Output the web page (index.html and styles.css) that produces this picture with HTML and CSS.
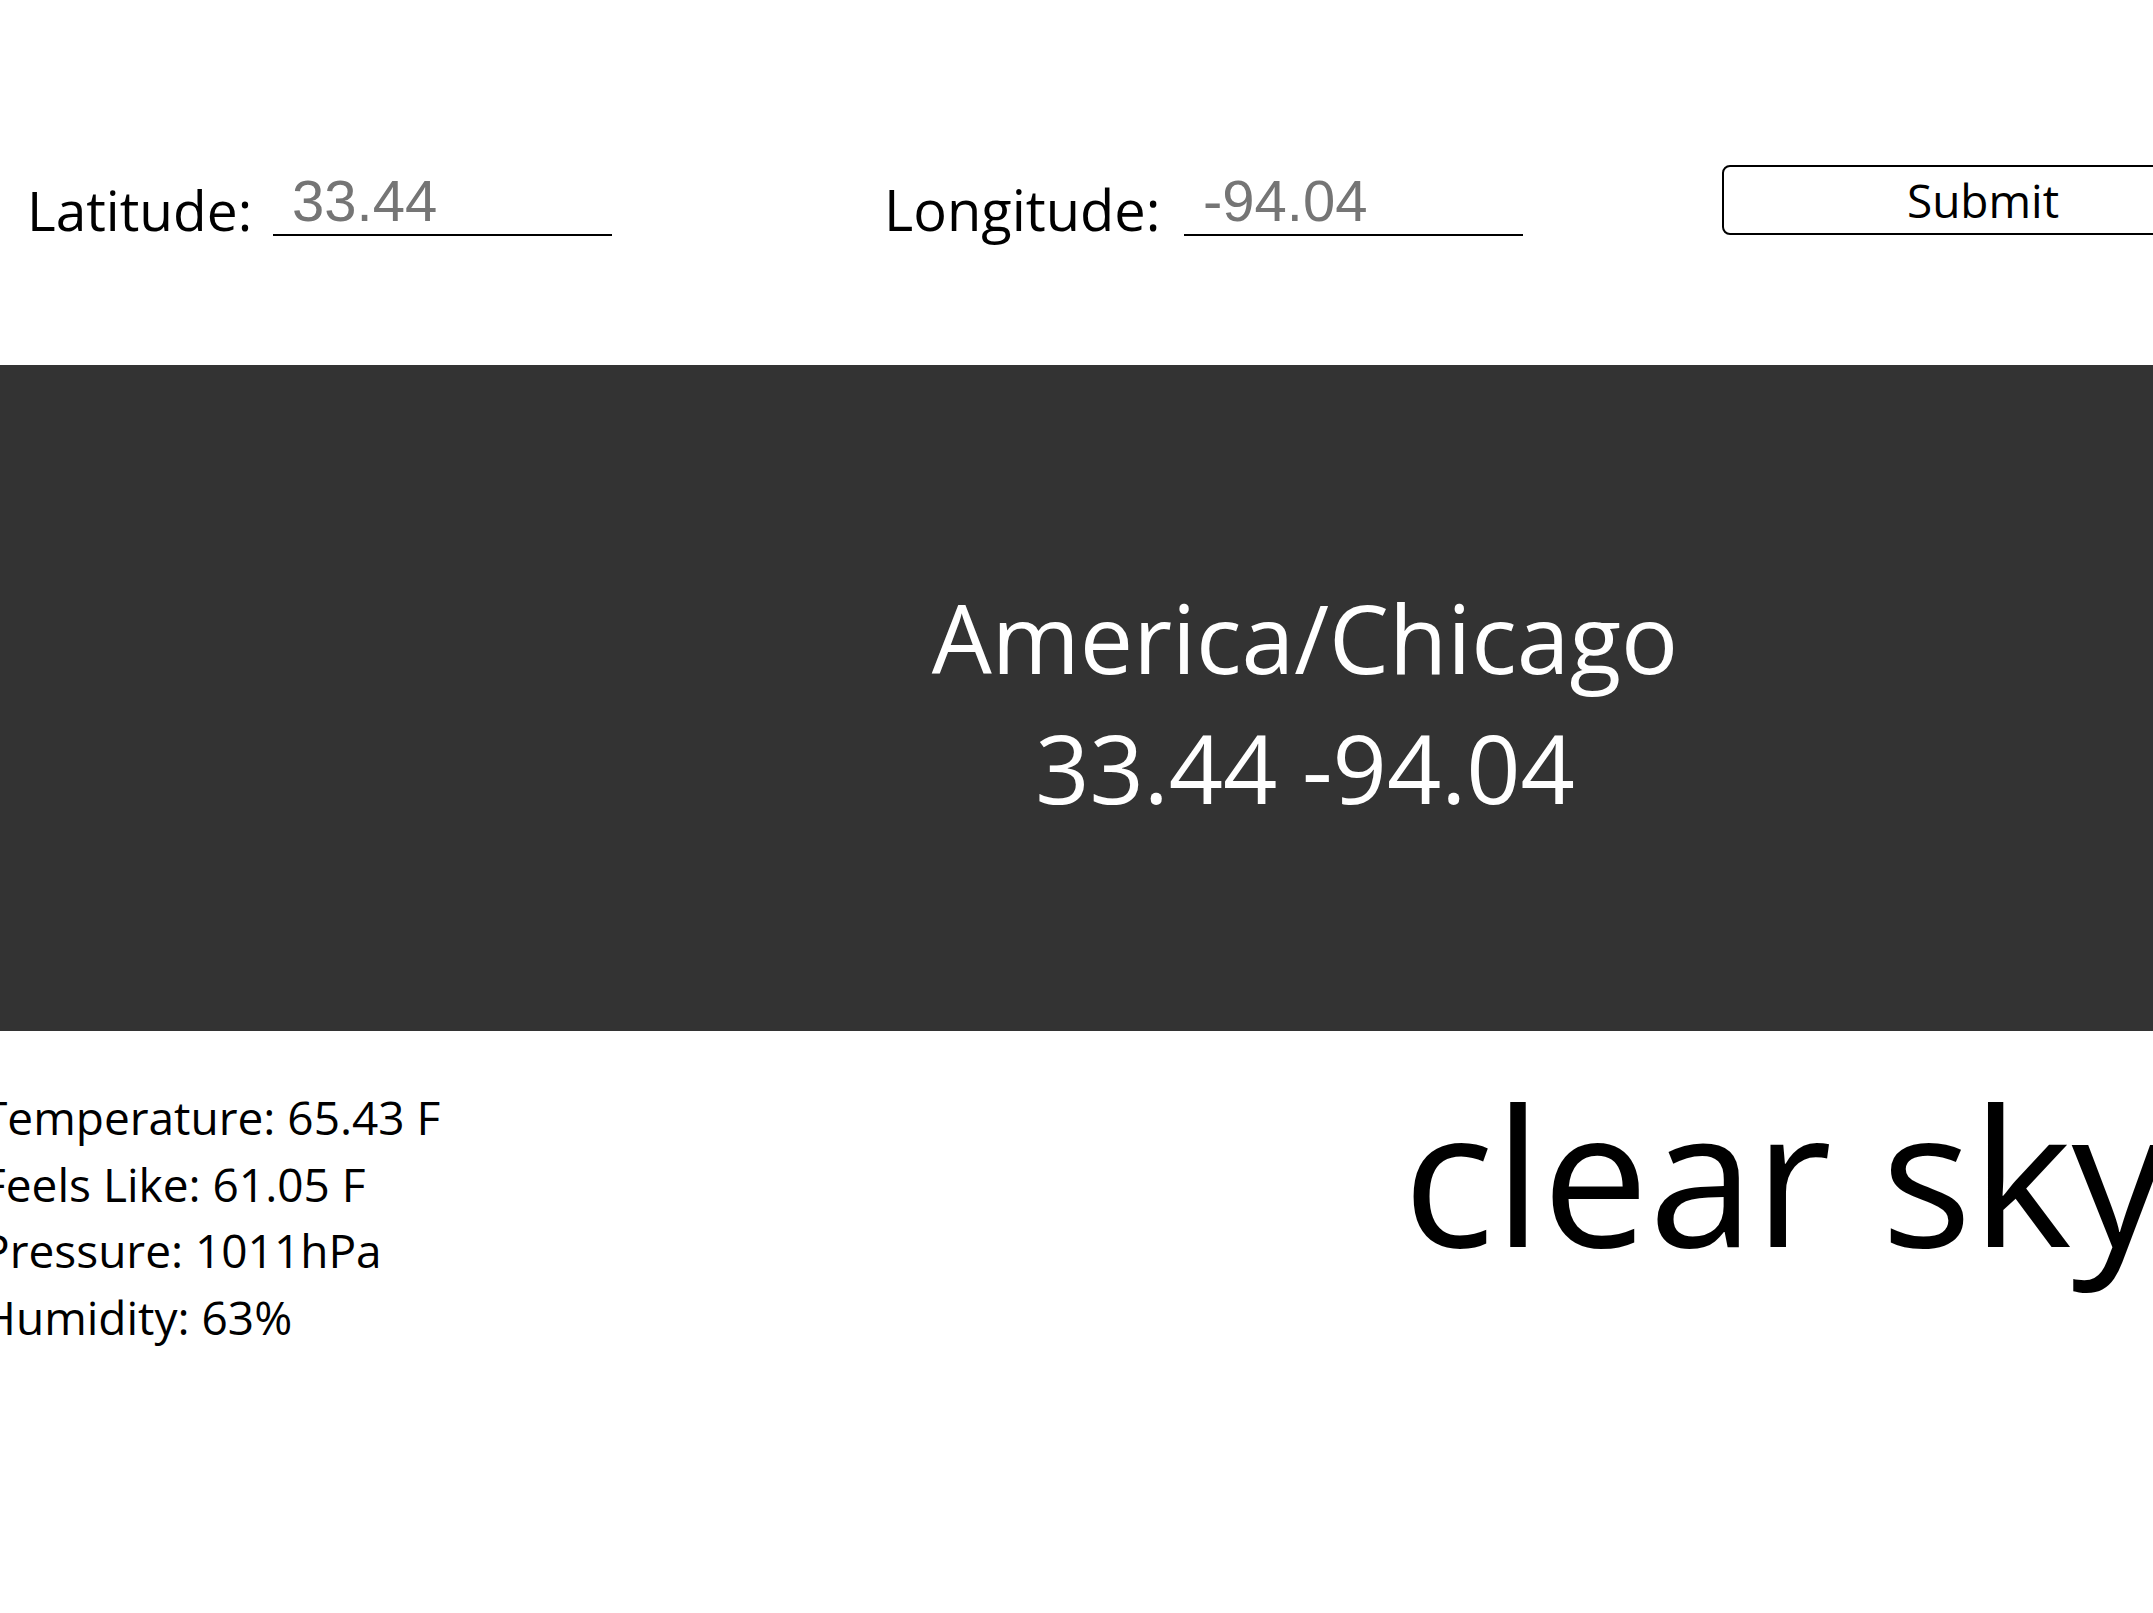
FILE: index.html
```html
<!DOCTYPE html>
<html lang="en">
<head>
<meta charset="utf-8">
<title>Weather</title>
<link rel="stylesheet" href="styles.css">
</head>
<body>
<form class="search">
  <div class="field field-lat">
    <label class="label label-lat" for="lat">Latitude:</label>
    <input class="coord" id="lat" type="text" placeholder="33.44">
  </div>
  <div class="field field-lon">
    <label class="label label-lon" for="lon">Longitude:</label>
    <input class="coord" id="lon" type="text" placeholder="-94.04">
  </div>
  <button class="submit" type="button">Submit</button>
</form>
<section class="band">
  <div class="zone">America/Chicago</div>
  <div class="zone">33.44 -94.04</div>
</section>
<section class="details">
  <ul class="stats">
    <li>Temperature: 65.43 F</li>
    <li>Feels Like: 61.05 F</li>
    <li>Pressure: 1011hPa</li>
    <li>Humidity: 63%</li>
  </ul>
  <div class="desc">clear sky</div>
</section>
</body>
</html>
```
FILE: styles.css
```css
html, body {
  margin: 0;
  padding: 0;
  overflow: hidden;
  background: #ffffff;
}
body {
  font-family: "Open Sans", "Noto Sans", sans-serif;
  color: #000000;
  width: 2153px;
  height: 1613px;
}
.search {
  display: flex;
  align-items: flex-end;
  height: 236px;
  padding-left: 27px;
  box-sizing: border-box;
}
.field {
  display: flex;
  align-items: flex-end;
  flex-shrink: 0;
}
.field-lon {
  margin-left: 272px;
}
.label {
  font-size: 55px;
  line-height: 55px;
  margin-bottom: -1px;
  flex-shrink: 0;
}
.label-lat { width: 246px; }
.label-lon {
  width: 300px;
  font-size: 56px;
}
.coord {
  box-sizing: border-box;
  width: 339px;
  flex-shrink: 0;
  font-family: "Liberation Sans", Arial, sans-serif;
  font-size: 58px;
  line-height: normal;
  padding: 0 19px;
  margin: 0;
  border: none;
  border-bottom: 2.5px solid #000;
  outline: none;
  background: transparent;
  color: #000;
}
.coord::placeholder {
  color: #757575;
  opacity: 1;
}
.submit {
  flex-shrink: 0;
  box-sizing: border-box;
  width: 522px;
  height: 70px;
  margin-left: 199px;
  margin-bottom: 1px;
  border: 2px solid #000;
  border-radius: 8px;
  background: #fff;
  color: #000;
  font-family: "Open Sans", "Noto Sans", sans-serif;
  font-size: 46px;
  line-height: 1;
  padding: 0;
}
.band {
  margin-top: 129px;
  height: 666px;
  box-sizing: border-box;
  background: #333333;
  color: #ffffff;
  padding-left: 457px;
  padding-top: 8px;
  display: flex;
  flex-direction: column;
  justify-content: center;
  align-items: center;
}
.zone {
  font-size: 95px;
  line-height: 130px;
  white-space: nowrap;
}
.details {
  display: grid;
  grid-template-columns: 1421px max-content;
  margin-left: -18px;
  align-items: start;
}
.stats {
  list-style: none;
  margin: 53px 0 0 0;
  padding: 0;
  font-size: 46px;
  line-height: 66.5px;
  white-space: nowrap;
}
.desc {
  margin-top: 10px;
  font-size: 190px;
  line-height: 266px;
  white-space: nowrap;
}
```
